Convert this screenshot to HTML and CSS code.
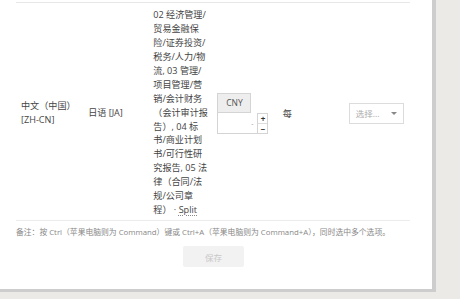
FILE: index.html
```html
<!DOCTYPE html>
<html lang="zh-CN">
<head>
<meta charset="utf-8">
<link rel="stylesheet" href="styles.css">
</head>
<body>
<div class="page">
  <div class="panel">
    <table class="grid">
      <tr>
        <td class="c1">中文（中国）[ZH-CN]</td>
        <td class="c2">日语 [JA]</td>
        <td class="c3">02 经济管理/贸易金融保险/证券投资/税务/人力/物流, 03 管理/项目管理/营销/会计财务（会计审计报告）, 04 标书/商业计划书/可行性研究报告, 05 法律（合同/法规/公司章程） · <span class="abbr">Split</span></td>
        <td class="c4">
          <div class="money">
            <div class="addon">CNY</div>
            <div class="numrow">
              <div class="num"><span class="dot">-</span></div>
              <div class="spin"><span class="plus">+</span><span class="minus">−</span></div>
            </div>
          </div>
        </td>
        <td class="c5">每</td>
        <td class="c6">
          <div class="select"><span class="ph">选择...</span><span class="caret"></span></div>
        </td>
      </tr>
    </table>
    <p class="note">备注：按 Ctrl（苹果电脑则为 Command）键或 Ctrl+A（苹果电脑则为 Command+A），同时选中多个选项。</p>
    <div class="actions"><button class="save">保存</button></div>
  </div>
</div>
</body>
</html>
```
FILE: styles.css
```css
html, body {
  margin: 0;
  padding: 0;
}
body {
  background: #ebeae7;
  font-family: "Open Sans", "Noto Sans CJK SC", sans-serif;
  color: #444;
  width: 460px;
  height: 299px;
  overflow: hidden;
}
.page {
  display: flex;
}
.panel {
  width: 394px;
  height: 287px;
  padding: 2px 22px 0 16px;
  background: #fff;
  border-right: 4px solid #cdcdcd;
  border-bottom: 3px solid #cdcdcd;
}
.grid {
  width: 394px;
  border-collapse: collapse;
  table-layout: fixed;
  border-top: 1px solid #e8e8e8;
  border-bottom: 1px solid #ececec;
}
.grid td {
  font-size: 9.1px;
  line-height: 13.93px;
  padding: 5px 5px 3px 5px;
  vertical-align: middle;
  word-break: normal;
}
.c1 { width: 57px; }
.c2 { width: 55px; }
.c3 { width: 56px; padding-right: 3px !important; }
.c4 { width: 55px; }
.c5 { width: 56px; }
.c6 { width: 56px; }
.abbr {
  text-decoration: underline dotted #888;
  text-underline-offset: 2px;
}
.money {
  display: flex;
  flex-direction: column;
  margin-top: 2px;
}
.addon {
  width: 34px;
  height: 20px;
  box-sizing: border-box;
  border: 1px solid #d4d4d4;
  background: #eeeeee;
  color: #555;
  font-size: 8.5px;
  display: flex;
  align-items: center;
  justify-content: center;
}
.numrow {
  display: flex;
}
.num {
  width: 41px;
  height: 21px;
  box-sizing: border-box;
  border: 1px solid #d4d4d4;
  border-top: none;
  display: flex;
  align-items: center;
  justify-content: flex-end;
  padding-right: 4px;
}
.dot {
  color: #999;
  font-size: 7px;
  line-height: 1;
}
.spin {
  width: 10px;
  height: 21px;
  box-sizing: border-box;
  border: 1px solid #d4d4d4;
  border-left: none;
  display: flex;
  flex-direction: column;
}
.plus, .minus {
  flex: 1;
  display: flex;
  align-items: center;
  justify-content: center;
  font-size: 8px;
  font-weight: bold;
  line-height: 8px;
  color: #333;
  overflow: hidden;
}
.minus {
  border-top: 1px solid #ddd;
}
.c5 {
  padding-top: 8px !important;
}
.select {
  width: 55px;
  height: 21px;
  box-sizing: border-box;
  border: 1px solid #dcdcdc;
  display: flex;
  align-items: center;
  justify-content: space-between;
  padding: 0 6px 0 6px;
  margin-top: 2px;
}
.ph {
  color: #aaa;
  font-size: 8.5px;
}
.caret {
  width: 0;
  height: 0;
  border-left: 3px solid transparent;
  border-right: 3px solid transparent;
  border-top: 3px solid #888;
}
.note {
  margin: 0;
  padding-top: 5px;
  font-size: 7.8px;
  line-height: 12px;
  color: #888;
  white-space: nowrap;
}
.actions {
  display: flex;
  padding-left: 167px;
  margin-top: 8px;
}
.save {
  width: 61px;
  height: 21px;
  border: none;
  border-radius: 2px;
  background: #f2f2f2;
  color: #c8c8c8;
  font-family: "Open Sans", "Noto Sans CJK SC", sans-serif;
  font-size: 8.5px;
  padding: 0;
}
```
